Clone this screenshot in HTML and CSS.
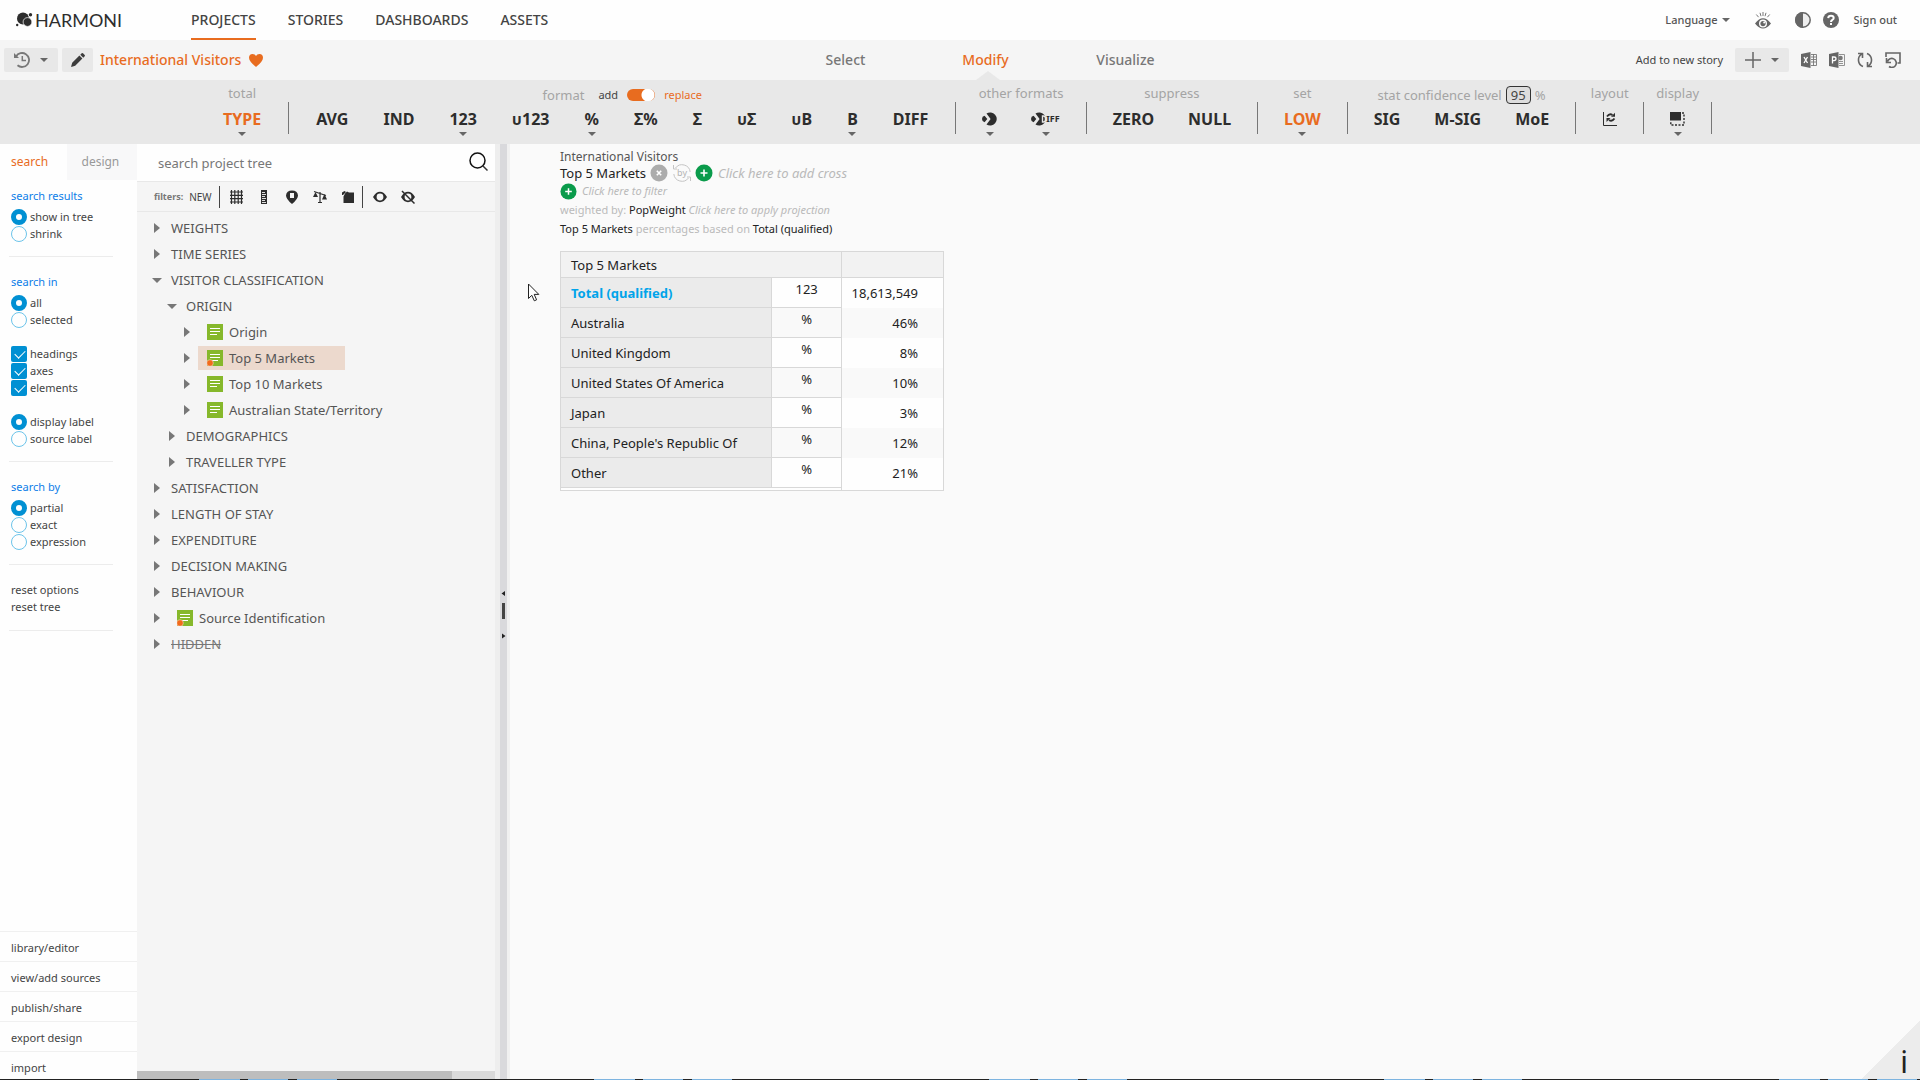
FILE: index.html
```html
<!DOCTYPE html>
<html lang="en">
<head>
<meta charset="utf-8">
<title>Harmoni – International Visitors</title>
<link rel="stylesheet" href="styles.css">
</head>
<body>
<svg class="defs" aria-hidden="true">
  <symbol id="axis" viewBox="0 0 16 16"><path fill="#86b82b" d="M0 0h16v16H0z"/><path stroke="#fff" d="M3 4.500h10M3 7.500h10M3 10.500h7"/></symbol>
  <symbol id="axis-used" viewBox="0 0 16 16"><path fill="#86b82b" d="M0 0h16v16H0z"/><path stroke="#fff" d="M3 4.500h10M3 7.500h10M5 10.500h6"/><circle cx="3" cy="13" r="3.300" fill="#f26a1b" stroke="#f6d9c4" stroke-width=".6"/></symbol>
  <symbol id="plus" viewBox="0 0 18 18"><circle cx="9" cy="9" r="8.500" fill="#0a9b4b"/><path stroke="#fff" stroke-width="1.600" d="M9 5.500v7M5.500 9h7"/></symbol>
  <symbol id="eye" viewBox="0 0 14 12"><path fill="#2d2d2d" fill-rule="evenodd" d="M0 6Q3 .8 7 .8T14 6Q11 11.200 7 11.200T0 6zM7 2.600a3.400 3.400 0 1 0 0 6.800 3.400 3.400 0 0 0 0-6.800z"/></symbol>
  <symbol id="bubble" viewBox="0 0 15 14"><path fill="#2d2d2d" d="M4.500 1.500A6.600 6.600 0 1 1 4.500 12.500L8.600 7zM2.600 3.800L5.300 7l-2.700 3.200Q0 9.600 0 7t2.600-3.200z"/></symbol>
</svg>

<header class="topbar">
  <a class="logo" href="#"><svg width="17" height="16" viewBox="0 0 17 16"><g fill="#2d2d2d"><circle cx="7" cy="6.500" r="6"/><circle cx="11.500" cy="10" r="4.400" stroke="#fff" stroke-width=".7"/><circle cx="14.500" cy="2.800" r="1.700"/><circle cx="1.200" cy="13" r="1.200"/></g></svg>HARMONI</a>
  <nav class="main-nav">
    <a class="active" href="#">PROJECTS</a><a href="#">STORIES</a><a href="#">DASHBOARDS</a><a href="#">ASSETS</a>
  </nav>
  <div class="user-tools">
    <button class="language">Language<i class="caret"></i></button>
    <button class="vision" aria-label="Vision"><svg width="16" height="17" viewBox="0 0 16 17"><path fill="#666" fill-rule="evenodd" d="M0 11.500Q4 6.200 8 6.200t8 5.300Q12 16.500 8 16.500T0 11.500zM8 7.400a4 4 0 1 0 0 8 4 4 0 0 0 0-8z"/><circle cx="8" cy="11.600" r="2.600" fill="#666"/><circle cx="9.200" cy="10.400" r="1" fill="#fff"/><path stroke="#777" d="M8 0v4M5 .8l1 3.400M11 .8l-1 3.400M1.300 2.500l2.300 2.700M14.700 2.500l-2.300 2.700"/></svg></button>
    <button class="contrast" aria-label="Contrast"><svg width="16" height="16" viewBox="0 0 16 16"><circle cx="8" cy="8" r="7.200" fill="#eee" stroke="#666" stroke-width="1.500"/><path fill="#666" d="M8 0a8 8 0 0 0 0 16z"/></svg></button>
    <button class="help" aria-label="Help"><svg width="16" height="16" viewBox="0 0 16 16"><circle cx="8" cy="8" r="8" fill="#666"/><path fill="none" stroke="#fff" stroke-width="2" d="M5.200 6.200Q5.400 3.800 8 3.800t2.700 2.200Q10.700 7.200 9.300 8 8 8.600 8 10"/><path fill="#fff" d="M7 11h2v2H7z"/></svg></button>
    <a class="signout" href="#">Sign out</a>
  </div>
</header>

<div class="toolbar">
  <div class="doc">
    <button class="chip wide" aria-label="History"><svg width="16" height="16" viewBox="0 0 16 16"><g fill="none" stroke="#777" stroke-width="1.800"><path d="M2 4.500A7 7 0 1 1 3.500 13.300"/><path d="M8.300 4v4.500H12" stroke-width="1.500"/></g><path fill="#777" d="M0 1v5h5z"/></svg><i class="caret"></i></button>
    <button class="chip" aria-label="Edit"><svg width="14" height="14" viewBox="0 0 14 14"><path fill="#3c3c3c" d="M0 14l1.200-4.200 7.200-7.200 3 3-7.200 7.200zM9.300 1.700L10.700.3q.7-.5 1.300 0L13.700 2q.5.700 0 1.300l-1.400 1.400z"/></svg></button>
    <h1>International Visitors</h1>
    <svg width="14" height="13" viewBox="0 0 14 13"><path fill="#e86c1f" d="M7 13Q0 7.500 0 3.800 0 0 3.600 0 6 0 7 2 8 0 10.400 0 14 0 14 3.800 14 7.500 7 13z"/></svg>
  </div>
  <nav class="modes"><a href="#">Select</a><a class="active" href="#">Modify</a><a href="#">Visualize</a></nav>
  <div class="story">
    <a href="#">Add to new story</a>
    <button class="chip wide" aria-label="Add"><svg width="16" height="16" viewBox="0 0 16 16"><path stroke="#666" stroke-width="1.500" d="M8 0v16M0 8h16"/></svg><i class="caret"></i></button>
    <button aria-label="Export to Excel"><svg width="16" height="16" viewBox="0 0 16 16"><path fill="#666" d="M0 2l9.500-2v16L0 14z"/><path fill="none" stroke="#777" d="M10 2.500h5.500v11H10M12.500 2v12M10 5h5M10 7.500h5M10 10h5" stroke-width=".9"/><path stroke="#fff" stroke-width="1.300" d="M3 5l3.500 6M6.500 5L3 11"/></svg></button>
    <button aria-label="Export to PowerPoint"><svg width="16" height="16" viewBox="0 0 16 16"><path fill="#666" d="M0 2l9.500-2v16L0 14z"/><path fill="none" stroke="#888" d="M10 2.500h5.500v11H10M10 9.500h4M10 11.500h4" stroke-width=".9"/><circle cx="11.500" cy="6" r="2.300" fill="#777"/><path fill="none" stroke="#fff" stroke-width="1.300" d="M3.500 11.500V5H5q2 0 2 1.800T5 8.600H3.500"/></svg></button>
    <button aria-label="Refresh"><svg width="16" height="16" viewBox="0 0 16 16"><g fill="none" stroke="#666" stroke-width="1.600"><path d="M6 14.500A7 7 0 0 1 4.500 2.200M1 1.500h4.500V6M10 1.500a7 7 0 0 1 1.500 12.300M15 14.500h-4.500V10"/></g></svg></button>
    <button aria-label="Undo"><svg width="16" height="16" viewBox="0 0 16 16"><g fill="none" stroke="#666" stroke-width="1.600"><path d="M1 5V1h14v10h-2.500M1.500 6v4.500H6M2.500 9.500A4.500 4.500 0 1 1 4 14.500"/></g></svg></button>
  </div>
</div>

<div class="ribbon">
  <section class="roomy"><header>total</header><div class="tools"><button class="on drop">TYPE</button></div></section>
  <section class="roomy"><header class="low"><span>format</span>
    <label class="toggle"><span>add</span><input type="checkbox" checked><span class="to">replace</span></label></header>
    <div class="tools"><button>AVG</button><button>IND</button><button class="drop">123</button><button>ᴜ123</button><button class="drop">%</button><button>Σ%</button><button>Σ</button><button>ᴜΣ</button><button>ᴜB</button><button class="drop">B</button><button>DIFF</button></div></section>
  <section><header>other formats</header><div class="tools">
    <button class="drop" aria-label="Bubble"><svg width="15" height="14"><use href="#bubble"/></svg></button>
    <button class="drop" aria-label="Bubble diff"><svg width="15" height="14" viewBox="0 0 15 14"><use href="#bubble"/><path fill="none" stroke="#e8e8e8" stroke-width="1.400" d="M11.500 4v6h1q2 0 2-3t-2-3z"/></svg><small>IFF</small></button></div></section>
  <section><header>suppress</header><div class="tools"><button>ZERO</button><button>NULL</button></div></section>
  <section><header>set</header><div class="tools"><button class="on drop">LOW</button></div></section>
  <section><header class="low"><label for="conf">stat confidence level</label><input id="conf" type="text" value="95"><span>%</span></header>
    <div class="tools"><button>SIG</button><button>M-SIG</button><button>MoE</button></div></section>
  <section class="narrow"><header>layout</header><div class="tools"><button aria-label="Swap axes"><svg width="14" height="14" viewBox="0 0 14 14"><path fill="none" stroke="#2d2d2d" d="M.5 0v13.500H14"/><path fill="none" stroke="#2d2d2d" stroke-width="1.800" d="M4 4.500Q6.500 1 9.500 3M11.500 6.500Q9 10 6 8"/><path fill="#2d2d2d" d="M12 .8v4H8zM3.500 10V6h4z"/></svg></button></div></section>
  <section class="narrow"><header>display</header><div class="tools"><button class="drop" aria-label="Display"><svg width="15" height="14" viewBox="0 0 15 14"><path fill="#2d2d2d" d="M0 0h11v8.500H0z"/><path fill="none" stroke="#2d2d2d" stroke-width="1.400" stroke-dasharray="2 1.500" d="M12 1h2v12H.8V9"/></svg></button></div></section>
</div>

<div class="workspace">
  <aside class="options">
    <div class="tabs" role="tablist"><button class="active" role="tab">search</button><button role="tab">design</button></div>
    <fieldset><legend>search results</legend>
      <label><input type="radio" name="results" checked>show in tree</label>
      <label><input type="radio" name="results">shrink</label></fieldset>
    <fieldset><legend>search in</legend>
      <label><input type="radio" name="scope" checked>all</label>
      <label><input type="radio" name="scope">selected</label>
      <label class="gap"><input type="checkbox" checked>headings</label>
      <label><input type="checkbox" checked>axes</label>
      <label><input type="checkbox" checked>elements</label>
      <label class="gap"><input type="radio" name="label" checked>display label</label>
      <label><input type="radio" name="label">source label</label></fieldset>
    <fieldset><legend>search by</legend>
      <label><input type="radio" name="by" checked>partial</label>
      <label><input type="radio" name="by">exact</label>
      <label><input type="radio" name="by">expression</label></fieldset>
    <div class="resets"><a href="#">reset options</a><a href="#">reset tree</a></div>
    <nav class="links"><a href="#">library/editor</a><a href="#">view/add sources</a><a href="#">publish/share</a><a href="#">export design</a><a href="#">import</a></nav>
  </aside>

  <section class="tree-panel">
    <div class="searchbox"><input type="text" aria-label="Search project tree" placeholder="search project tree"><button aria-label="Search"><svg width="19" height="19" viewBox="0 0 19 19"><circle cx="8.500" cy="8.500" r="7.500" fill="none" stroke="#111" stroke-width="1.500"/><path stroke="#333" stroke-width="1.500" d="M14 14l4.500 4.500"/></svg></button></div>
    <div class="filters">
      <b>filters:</b><button class="new">NEW</button><i class="bar"></i>
      <button aria-label="Grid"><svg width="13" height="14" viewBox="0 0 13 14"><path fill="none" stroke="#2d2d2d" stroke-width="1.200" d="M1.500 0v14M4.800 0v14M8.200 0v14M11.500 0v14M0 2h13M0 5.300h13M0 8.700h13M0 12h13"/></svg></button>
      <button aria-label="Numeric"><svg width="14" height="14" viewBox="0 0 14 14"><path fill="#2d2d2d" d="M4 0h6v14H4z"/><path stroke="#ddd" d="M5 2.500h3M5 4.500h4M5 6.500h3M5 8.500h4M5 10.500h3M5 12.500h4"/></svg></button>
      <button aria-label="Location"><svg width="14" height="14" viewBox="0 0 14 14"><path fill="#2d2d2d" fill-rule="evenodd" d="M7 14Q1 9 1 5.500 1.500.5 7 .5T13 5.500Q13 9 7 14zM5 3v5h4V3z"/></svg></button>
      <button aria-label="Weights"><svg width="14" height="14" viewBox="0 0 14 14"><path stroke="#2d2d2d" d="M1 1.500l12 4M7 2v10M5 12.500h4" stroke-width="1.200"/><path fill="#2d2d2d" d="M2.500 2L5 7H0zM11.500 4L14 9.500H9z"/></svg></button>
      <button aria-label="Documents"><svg width="14" height="14" viewBox="0 0 14 14"><path fill="#2d2d2d" d="M4 3.500l2-2 2 1h5V13H2.500V6.500zM1 5V2.500L3.500 1 5 2 2 5z"/></svg></button>
      <i class="bar"></i>
      <button aria-label="Show"><svg width="14" height="12"><use href="#eye"/></svg></button>
      <button aria-label="Hide"><svg width="14" height="14" viewBox="0 0 14 14"><use href="#eye" y="1" width="14" height="12"/><path stroke="#2d2d2d" stroke-width="1.500" d="M1 1l12.500 12.500"/></svg></button>
    </div>
    <ul class="tree">
      <li><div class="node"><i class="tw"></i>WEIGHTS</div></li>
      <li><div class="node"><i class="tw"></i>TIME SERIES</div></li>
      <li><div class="node"><i class="tw open"></i>VISITOR CLASSIFICATION</div>
        <ul>
          <li><div class="node"><i class="tw open"></i>ORIGIN</div>
            <ul>
              <li><div class="node"><i class="tw"></i><span class="leaf"><svg width="16" height="16"><use href="#axis"/></svg>Origin</span></div></li>
              <li><div class="node"><i class="tw"></i><span class="leaf selected"><svg width="16" height="16"><use href="#axis-used"/></svg>Top 5 Markets</span></div></li>
              <li><div class="node"><i class="tw"></i><span class="leaf"><svg width="16" height="16"><use href="#axis"/></svg>Top 10 Markets</span></div></li>
              <li><div class="node"><i class="tw"></i><span class="leaf"><svg width="16" height="16"><use href="#axis"/></svg>Australian State/Territory</span></div></li>
            </ul></li>
          <li><div class="node"><i class="tw"></i>DEMOGRAPHICS</div></li>
          <li><div class="node"><i class="tw"></i>TRAVELLER TYPE</div></li>
        </ul></li>
      <li><div class="node"><i class="tw"></i>SATISFACTION</div></li>
      <li><div class="node"><i class="tw"></i>LENGTH OF STAY</div></li>
      <li><div class="node"><i class="tw"></i>EXPENDITURE</div></li>
      <li><div class="node"><i class="tw"></i>DECISION MAKING</div></li>
      <li><div class="node"><i class="tw"></i>BEHAVIOUR</div></li>
      <li><div class="node"><i class="tw"></i><span class="leaf"><svg width="16" height="16"><use href="#axis-used"/></svg>Source Identification</span></div></li>
      <li><div class="node"><i class="tw"></i><s>HIDDEN</s></div></li>
    </ul>
    <div class="hscroll"><div class="thumb"></div></div>
  </section>

  <div class="splitter"><svg width="7" height="54" viewBox="0 -4 7 54"><path fill="#222" d="M5 2v5L1.500 4.500zM2 49.500v-5L5.500 47z"/><rect x="2" y="14" width="3" height="16" fill="#444"/></svg></div>

  <main>
    <p class="title">International Visitors</p>
    <p class="cross"><span>Top 5 Markets</span>
      <button aria-label="Remove"><svg width="18" height="18" viewBox="0 0 18 18"><circle cx="9" cy="9" r="8.500" fill="#acacac"/><path stroke="#fff" stroke-width="1.600" d="M6.800 6.800l4.400 4.400M11.200 6.800l-4.400 4.400"/></svg></button>
      <button class="by" aria-label="Swap"><svg width="18" height="18" viewBox="0 0 18 18"><g fill="none" stroke="#c4c4c4"><path d="M2.500 4A8.200 8.200 0 0 1 17.200 8M15.500 14A8.200 8.200 0 0 1 .8 10M.5 1v4H4M17.500 17v-4H14"/></g></svg><span>by</span></button>
      <button aria-label="Add cross"><svg width="18" height="18"><use href="#plus"/></svg></button>
      <em>Click here to add cross</em></p>
    <p class="small filter"><button aria-label="Add filter"><svg width="17" height="17"><use href="#plus"/></svg></button><em>Click here to filter</em></p>
    <p class="small line"><span class="dim">weighted by:</span> PopWeight <em>Click here to apply projection</em></p>
    <p class="small line">Top 5 Markets <span class="dim">percentages based on</span> Total (qualified)</p>
    <table>
      <thead><tr><th colspan="2">Top 5 Markets</th><th></th></tr></thead>
      <tbody>
        <tr class="total"><th scope="row">Total (qualified)</th><td>123</td><td>18,613,549</td></tr>
        <tr><th scope="row">Australia</th><td>%</td><td>46%</td></tr>
        <tr><th scope="row">United Kingdom</th><td>%</td><td>8%</td></tr>
        <tr><th scope="row">United States Of America</th><td>%</td><td>10%</td></tr>
        <tr><th scope="row">Japan</th><td>%</td><td>3%</td></tr>
        <tr><th scope="row">China, People's Republic Of</th><td>%</td><td>12%</td></tr>
        <tr><th scope="row">Other</th><td>%</td><td>21%</td></tr>
      </tbody>
      <tfoot><tr><td colspan="2"></td><td></td></tr></tfoot>
    </table>
    <button class="info" aria-label="Information">i</button>
    <svg class="pointer" width="12" height="19" viewBox="0 0 12 19"><path fill="#fff" stroke="#222" d="M.5 1v14.500l3.300-3.200 2.500 5.500 2.300-1-2.400-5.400h4.600z"/></svg>
  </main>
</div>
<div class="taskbar"></div>
</body>
</html>
```
FILE: styles.css
```css
* { box-sizing: border-box; }

body {
  margin: 0;
  height: 100vh;
  display: flex;
  flex-direction: column;
  overflow: hidden;
  background: #fdfdfd;
  color: #444;
  font: 11px/16px "Noto Sans", "Open Sans", sans-serif;
}

a { color: inherit; text-decoration: none; }
p, h1, ul, fieldset { margin: 0; padding: 0; border: 0; }
ul { list-style: none; }
svg { display: block; flex: none; }
.defs { position: absolute; width: 0; height: 0; }

button {
  display: flex;
  align-items: center;
  margin: 0;
  padding: 0;
  border: 0;
  background: none;
  color: inherit;
  font: inherit;
}

.caret {
  border: 4px solid transparent;
  border-top-color: #666;
  border-bottom: 0;
}

/* Top bar */
.topbar { display: flex; flex: none; height: 40px; padding: 0 23px 0 16px; background: #fefefe; }
.logo {
  display: flex;
  align-items: center;
  gap: 2px;
  width: 175px;
  color: #2d2d2d;
  font: 18px/40px Lato, sans-serif;
}
.main-nav { display: flex; flex: 1; gap: 32px; font-size: 14px; font-weight: 500; }
.main-nav a { height: 40px; line-height: 40px; }
.main-nav .active { border-bottom: 2px solid #e86c1f; }
.user-tools { display: flex; align-items: center; color: #555; font-weight: 500; }
.language { gap: 4px; margin-right: 25px; }
.vision { margin-right: 24px; }
.contrast { margin-right: 12px; }
.help { margin-right: 15px; }

/* Document toolbar */
.toolbar {
  display: grid;
  grid-template-columns: 1fr auto 1fr;
  align-items: center;
  flex: none;
  height: 40px;
  padding: 0 19px 0 4px;
  background: #f5f5f5;
}
.doc, .story { display: flex; align-items: center; }
.doc h1 { margin: 0 8px 0 7px; color: #e86c1f; font-size: 14px; font-weight: 500; line-height: 20px; }
.chip { justify-content: center; width: 31px; height: 24px; border-radius: 2px; background: #e8e8e8; }
.chip.wide { gap: 10px; width: 54px; }
.doc .chip.wide { margin-right: 4px; }
.modes { display: flex; margin-left: 66px; color: #777; font-size: 14px; font-weight: 500; }
.modes a { width: 140px; height: 40px; line-height: 40px; text-align: center; }
.modes .active { position: relative; color: #e86c1f; }
.modes .active::after {
  content: "";
  position: absolute;
  bottom: 0;
  left: 50%;
  margin-left: -10px;
  border: 12px solid transparent;
  border-top: 0;
  border-bottom: 9px solid #e8e8e8;
}
.story { justify-content: flex-end; gap: 12px; }

/* Ribbon */
.ribbon { display: flex; flex: none; height: 64px; padding-left: 196px; background: #e8e8e8; }
.ribbon section { position: relative; display: flex; flex-direction: column; padding: 0 9px; border-right: 1px solid transparent; }
.ribbon section::after { content: ""; position: absolute; right: -1px; top: 22px; width: 1px; height: 32px; background: #777; }
.ribbon .roomy { padding: 0 10px; }
.ribbon .roomy .tools { gap: 1px; }
.ribbon header {
  display: flex;
  justify-content: center;
  align-items: center;
  height: 26px;
  color: #a4a4a4;
  font-size: 13px;
}
.ribbon header.low { padding-top: 4px; }
.ribbon .tools { display: flex; justify-content: center; }
.ribbon .tools button {
  position: relative;
  height: 26px;
  padding: 0 17px;
  color: #2d2d2d;
  font-size: 16px;
  font-weight: 700;
}
.ribbon .tools .on { color: #e86c1f; }
.ribbon .tools small { font-size: 9px; }
.ribbon .narrow { width: 68px; }
.drop::after {
  content: "";
  position: absolute;
  left: 50%;
  bottom: -4px;
  margin-left: -4px;
  border: 4px solid transparent;
  border-top-color: #666;
  border-bottom: 0;
}
.toggle { display: flex; align-items: center; gap: 9px; margin-left: 14px; color: #444; font-size: 11px; }
.toggle .to { color: #e86c1f; }
.toggle input {
  appearance: none;
  width: 28px;
  height: 12px;
  margin: 0;
  border-radius: 6px;
  background: radial-gradient(circle at 21px 6px, #fff 6px, transparent 7px), #e86c1f;
}
#conf {
  width: 25px;
  height: 18px;
  margin: 0 4px;
  padding: 0;
  border: 1px solid #333;
  border-radius: 4px;
  background: #ddd;
  color: #444;
  font: inherit;
  text-align: center;
}

/* Workspace */
.workspace { display: flex; flex: 1; min-height: 0; }

.options { display: flex; flex-direction: column; flex: none; width: 137px; overflow: hidden; background: #fefefe; }
.tabs { display: flex; height: 36px; }
.tabs button { flex: 1; padding-left: 15px; background: #f8f8f9; color: #999; font-size: 12px; }
.tabs .active { padding-left: 11px; background: none; color: #e86c1f; }
.options fieldset, .resets {
  display: flex;
  flex-direction: column;
  min-width: 0;
  margin: 0 24px 17px 9px;
  padding: 0 0 14px 2px;
  border-bottom: 1px solid #ececec;
}
.options legend { float: left; height: 16px; padding: 0; margin-bottom: 4px; color: #0d7de8; }
.tabs + fieldset { margin-top: 8px; }
.options label { display: flex; align-items: center; gap: 3px; height: 17px; white-space: nowrap; }
.options label.gap { margin-top: 17px; }
.options input { appearance: none; flex: none; width: 16px; height: 16px; margin: 0; }
.options input[type="radio"] { border: 1px solid #6cc4ea; border-radius: 50%; }
.options input[type="radio"]:checked { border: 5px solid #0090d3; }
.options input[type="checkbox"] { position: relative; border-radius: 2px; background: #0090d3; }
.options input[type="checkbox"]::after {
  content: "";
  position: absolute;
  left: 4px;
  top: 4px;
  width: 9px;
  height: 5px;
  border: solid #fff;
  border-width: 0 0 1px 1px;
  transform: rotate(-45deg);
}
.resets a { height: 17px; }
.links { margin-top: auto; margin-bottom: -2px; }
.links a { display: block; height: 30px; padding-left: 11px; border-top: 1px solid #f0f0f0; line-height: 32px; }

.tree-panel { display: flex; flex-direction: column; flex: none; width: 358px; background: #f5f5f5; }
.searchbox { display: flex; align-items: center; height: 37px; padding: 0 7px 0 21px; background: #fefefe; }
.searchbox input { flex: 1; min-width: 0; padding: 0; border: 0; outline: 0; background: none; color: #777; font: 13px/18px "Noto Sans", sans-serif; }
.searchbox input::placeholder { color: #777; }
.searchbox button { padding-bottom: 2px; }
.filters {
  display: flex;
  align-items: center;
  height: 31px;
  padding-left: 17px;
  border: solid #e8e8e8;
  border-width: 1px 0;
  font-size: 10px;
}
.filters b { margin-right: 6px; font-size: 9px; color: #777; }
.filters .bar { width: 1px; height: 22px; margin: 0 10px 0 7px; background: #444; }
.filters button + button { margin-left: 14px; }
.tree { flex: 1; min-height: 0; padding: 3px 0 0 17px; color: #555; font-size: 13px; }
.tree ul { padding-left: 15px; }
.node { display: flex; align-items: center; height: 26px; }
.tw { width: 17px; }
.tw::before { content: ""; display: block; width: 0; border: 5px solid transparent; border-left: 6px solid #777; border-right: 0; }
.tw.open::before { margin-left: -2px; border: 5px solid transparent; border-top: 5px solid #777; border-bottom: 0; }
.leaf { display: flex; align-items: center; gap: 6px; height: 24px; margin-left: -3px; padding: 0 30px 0 9px; }
.leaf.selected { background: #ecd9cd; }
.tree s { color: #777; }
.hscroll { height: 8px; background: #dadada; }
.hscroll .thumb { width: 88%; height: 8px; background: #bdbdbd; }

.splitter {
  display: flex;
  align-items: center;
  flex: none;
  width: 15px;
  padding-left: 5px;
  background: linear-gradient(to right, #eee 5px, #d9d9dc 5px 12px, #f0f0f0 12px);
}

main { position: relative; flex: 1; min-width: 0; padding: 5px 50px; background: #fafafa; color: #222; font-size: 13px; }
main em { color: #b9b9b9; }
main .dim { color: #bbb; }
.small { font-size: 11px; }
.title { height: 15px; color: #555; font-size: 12px; line-height: 15px; }
.cross, .filter { display: flex; align-items: center; }
.cross { gap: 4px; height: 18px; }
.cross em { margin-left: 1px; }
.by { position: relative; margin-left: 1px; }
.by span { position: absolute; left: 0; width: 18px; color: #b4b4b4; font-size: 9px; line-height: 12px; text-align: center; }
.filter { gap: 5px; height: 18px; }
.line { height: 19px; line-height: 19px; }

table { width: 384px; margin-top: 13px; border-collapse: collapse; background: #fefefe; border: 1px solid #d8d8d8; color: #222; }
th, td { padding: 0; font-weight: 400; text-align: left; }
thead th { height: 26px; padding-left: 10px; border: 1px solid #d8d8d8; background: #f2f2f2; }
tbody tr { height: 30px; }
tbody th { width: 212px; padding-left: 10px; border: 1px solid #d8d8d8; background: #ebebeb; }
tbody td { width: 70px; padding-bottom: 8px; border: 1px solid #d8d8d8; text-align: center; }
tbody td:last-child { width: 102px; padding: 0 25px 0 0; border-width: 0 1px; border-style: solid; text-align: right; }
tbody tr:nth-child(even) td { background: #f9f9f9; }
tfoot td { height: 3px; }
tfoot td:last-child { border-left: 1px solid #d8d8d8; }
.total th { color: #00a4ea; font-weight: 700; }

.info {
  position: absolute;
  right: 0;
  bottom: 0;
  justify-content: flex-end;
  width: 58px;
  height: 58px;
  padding: 24px 12px 0 0;
  background: linear-gradient(135deg, transparent 50%, #ececec 50%);
  color: #222;
  font-size: 30px;
}
.pointer { position: absolute; left: 18px; top: 139px; }

.taskbar { flex: none; height: 1px; background: repeating-linear-gradient(to right, #222 0 199px, #7db4e0 199px 240px, #222 240px 248px, #7db4e0 248px 288px, #222 288px 297px, #7db4e0 297px 337px, #222 337px 395px); }
```
